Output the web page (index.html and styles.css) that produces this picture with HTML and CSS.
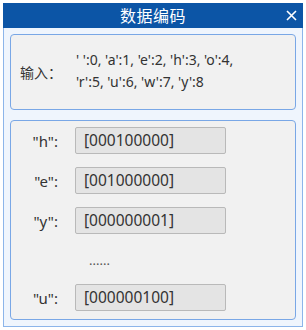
FILE: index.html
```html
<!DOCTYPE html>
<html lang="zh">
<head>
    <meta charset="UTF-8">
    <title>数据编码</title>
    <link rel="stylesheet" href="styles.css">
</head>
<body>
    <div class="window">
        <div class="title-bar">
            <span class="title">数据编码</span>
            <svg class="close" width="11" height="11" viewBox="0 0 11 11">
                <path d="M1 1 L10 10 M10 1 L1 10" stroke="#fff" stroke-width="1.6" fill="none"/>
            </svg>
        </div>
        <div class="content">
            <div class="panel input-panel">
                <div class="input-label">输入：</div>
                <div class="input-text">' ':0, 'a':1, 'e':2, 'h':3, 'o':4,<br>'r':5, 'u':6, 'w':7, 'y':8</div>
            </div>
            <div class="panel code-panel">
                <div class="code-row">
                    <span class="key">"h":</span>
                    <span class="field">[000100000]</span>
                </div>
                <div class="code-row">
                    <span class="key">"e":</span>
                    <span class="field">[001000000]</span>
                </div>
                <div class="code-row">
                    <span class="key">"y":</span>
                    <span class="field">[000000001]</span>
                </div>
                <div class="dots">......</div>
                <div class="code-row">
                    <span class="key">"u":</span>
                    <span class="field">[000000100]</span>
                </div>
            </div>
        </div>
    </div>
</body>
</html>
```
FILE: styles.css
```css
* {
    margin: 0;
    padding: 0;
    box-sizing: border-box;
}

body {
    background: #ffffff;
    font-family: "Noto Sans", "Noto Sans CJK SC", sans-serif;
    color: #333333;
}

.window {
    margin: 3px;
    width: 300px;
    height: 324px;
    border: 1px solid #8cb5ea;
    background: #eff5fd;
    display: flex;
    flex-direction: column;
}

.title-bar {
    height: 25px;
    margin: -1px -1px 0 -1px;
    background: #0c55a6;
    display: flex;
    align-items: center;
    justify-content: center;
    position: relative;
}

.title {
    color: #ffffff;
    font-size: 16px;
    letter-spacing: 0.5px;
    margin-top: -2px;
}

.close {
    position: absolute;
    right: 6px;
    top: 7px;
}

.content {
    flex: 1;
    padding: 6px;
    display: flex;
    flex-direction: column;
    gap: 10px;
}

.panel {
    background: #f1f1f1;
    border: 1px solid #79a7e6;
    border-radius: 4px;
}

.input-panel {
    height: 76px;
    display: flex;
    align-items: center;
    padding-left: 9px;
}

.input-label {
    font-size: 14px;
    width: 56px;
}

.input-text {
    font-size: 14px;
    line-height: 22px;
    margin-top: -2px;
    white-space: nowrap;
}

.code-panel {
    flex: 1;
    padding: 6px 0 0 0;
    display: flex;
    flex-direction: column;
    gap: 13px;
}

.code-row {
    display: flex;
    align-items: center;
    height: 27px;
}

.key {
    font-size: 15px;
    width: 51px;
    text-align: right;
    padding-right: 4px;
}

.field {
    margin-left: 13px;
    width: 151px;
    height: 27px;
    background: #e4e4e4;
    border: 1px solid #b9b9b9;
    border-radius: 2px;
    font-size: 15.5px;
    line-height: 25px;
    padding-left: 8px;
}

.dots {
    height: 24px;
    line-height: 26px;
    font-size: 13px;
    color: #555555;
    padding-left: 78px;
}
```
